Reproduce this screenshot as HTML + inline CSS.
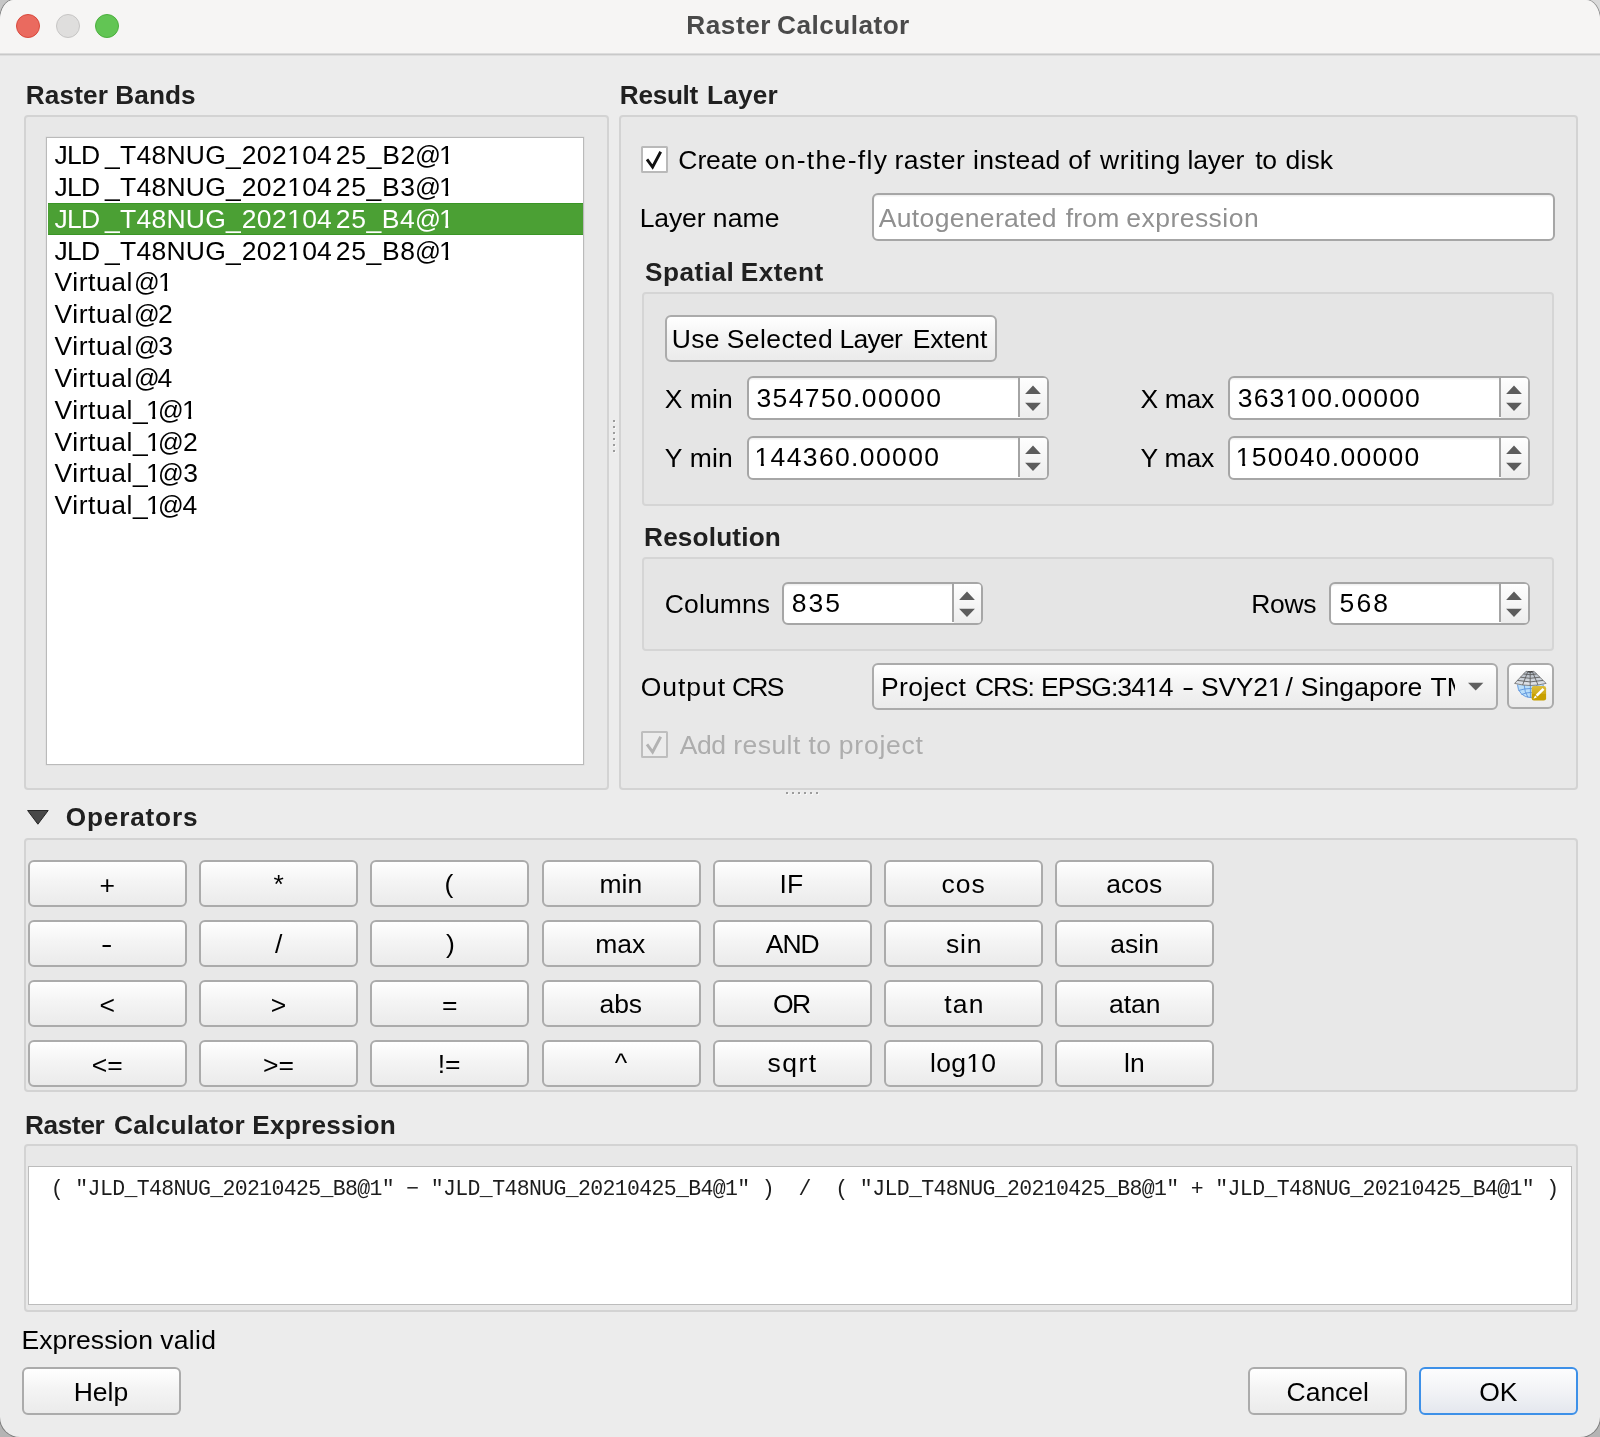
<!DOCTYPE html>
<html><head><meta charset="utf-8"><title>Raster Calculator</title>
<style>
html,body{margin:0;padding:0;}
body{width:1600px;height:1437px;overflow:hidden;background:#b4b4b4;font-family:"Liberation Sans",sans-serif;position:relative;}
#win{will-change:transform;position:absolute;left:0;top:0;width:1600px;height:1437px;background:#ececec;border-radius:13.5px 14px 20px 20px / 20.5px 20.5px 20px 20px;overflow:hidden;box-shadow:0 0 0 1px rgba(0,0,0,.32);}
#tb{position:absolute;left:0;top:0;width:1600px;height:56px;background:linear-gradient(#f6f5f4 0,#f6f5f4 53px,#dcdcdc 53px,#dcdcdc 54px,#c9c9c9 54px,#c9c9c9 55px,#dedede 55px,#dedede 56px);}
.a{position:absolute;box-sizing:border-box;}
.t{position:absolute;white-space:pre;line-height:1;color:#000;}
.gb{border:2px solid #d3d3d3;background:#e8e8e8;border-radius:4px;}
.gb2{border:2px solid #d5d5d5;background:#e5e5e5;border-radius:4px;}
.btn{border:2px solid #ababab;border-radius:6px;background:linear-gradient(#ffffff,#f4f4f4 45%,#ebebeb);}
.inp{border:2px solid #a6a6a6;border-radius:6px;background:#fff;box-shadow:inset 0 1.5px 1px rgba(0,0,0,.06);}
.dot{border-radius:50%;}
.o{display:inline-block;font-style:normal;clip-path:polygon(0 0,100% 0,100% 20px,9.35px 20px,9.35px 100%,6.35px 100%,6.35px 20px,0 20px);}
</style></head><body><div class="a" style="left:0;top:0;width:14px;height:20px;background:#c6c6c6"></div><div class="a" style="left:1586px;top:0;width:14px;height:20px;background:#dadada"></div><div id="win">
<div id="tb"></div>

<div class="a dot" style="left:16px;top:14px;width:24px;height:24px;background:#ea6a5f;border:1px solid #d8493d;"></div>
<div class="a dot" style="left:56px;top:14px;width:24px;height:24px;background:#dfdedd;border:1px solid #c6c5c4;"></div>
<div class="a dot" style="left:95.4px;top:14px;width:24px;height:24px;background:#62c554;border:1px solid #4caf3e;"></div>
<div class="a gb" style="left:24px;top:115px;width:585px;height:675px;"></div>
<div class="a gb" style="left:619px;top:115px;width:959px;height:675px;"></div>
<div class="a gb2" style="left:642px;top:292px;width:912px;height:213.5px;"></div>
<div class="a gb2" style="left:642px;top:557px;width:912px;height:94px;"></div>
<div class="a gb" style="left:24px;top:838px;width:1554px;height:254px;"></div>
<div class="a gb" style="left:24px;top:1144px;width:1554px;height:168px;"></div>
<div class="a a" style="left:46px;top:137px;width:538px;height:628px;background:#fff;border:1px solid #bababa;box-shadow:0 0 0 0.5px rgba(190,190,190,.35);"></div>
<div class="a a" style="left:48px;top:203px;width:535px;height:32px;background:#4ba034;border-top:1px solid #3a9526;border-bottom:1px solid #3a9526;"></div>
<div class="a a" style="left:641px;top:146px;width:27px;height:27px;background:#fff;border:2px solid #b9b9b9;border-radius:1.5px;"></div>
<svg class="a" style="left:641px;top:145.6px" width="28" height="28" viewBox="0 0 28 28"><path d="M6.0 13.3 L11.6 21.0 L19.7 5.8" fill="none" stroke="#111" stroke-width="2.9" stroke-linejoin="miter" stroke-miterlimit="6"/></svg>
<div class="a a" style="left:641px;top:731px;width:27px;height:27px;background:#ececec;border:2px solid #bebebe;border-radius:1.5px;"></div>
<svg class="a" style="left:641px;top:730.6px" width="28" height="28" viewBox="0 0 28 28"><path d="M6.0 13.3 L11.6 21.0 L19.7 5.8" fill="none" stroke="#b2b2b2" stroke-width="2.9" stroke-linejoin="miter" stroke-miterlimit="6"/></svg>
<div class="a inp" style="left:872px;top:193px;width:682.5px;height:48px;"></div>
<div class="a btn" style="left:665px;top:315px;width:332px;height:47px;"></div>
<div class="a inp" style="left:747px;top:376px;width:302px;height:44px;overflow:hidden;"></div>
<div class="a" style="left:1020px;top:378px;width:27px;height:40px;background:linear-gradient(#fefefe,#ededed);border-radius:0 3px 3px 0;"></div>
<div class="a" style="left:1018px;top:377px;width:2px;height:40px;background:#a4a4a4;"></div>
<svg class="a" style="left:1022.8px;top:382.4px" width="20" height="32" viewBox="0 0 20 32"><path d="M10 3.6 L17.9 12 L2.1 12 Z M2.1 20.8 L17.9 20.8 L10 29 Z" fill="#5c5c5c"/></svg>
<div class="a inp" style="left:747px;top:436px;width:302px;height:43.5px;overflow:hidden;"></div>
<div class="a" style="left:1020px;top:438px;width:27px;height:39.5px;background:linear-gradient(#fefefe,#ededed);border-radius:0 3px 3px 0;"></div>
<div class="a" style="left:1018px;top:437px;width:2px;height:39.5px;background:#a4a4a4;"></div>
<svg class="a" style="left:1022.8px;top:442.15px" width="20" height="32" viewBox="0 0 20 32"><path d="M10 3.6 L17.9 12 L2.1 12 Z M2.1 20.8 L17.9 20.8 L10 29 Z" fill="#5c5c5c"/></svg>
<div class="a inp" style="left:1228px;top:376px;width:302px;height:44px;overflow:hidden;"></div>
<div class="a" style="left:1501px;top:378px;width:27px;height:40px;background:linear-gradient(#fefefe,#ededed);border-radius:0 3px 3px 0;"></div>
<div class="a" style="left:1499px;top:377px;width:2px;height:40px;background:#a4a4a4;"></div>
<svg class="a" style="left:1503.8px;top:382.4px" width="20" height="32" viewBox="0 0 20 32"><path d="M10 3.6 L17.9 12 L2.1 12 Z M2.1 20.8 L17.9 20.8 L10 29 Z" fill="#5c5c5c"/></svg>
<div class="a inp" style="left:1228px;top:436px;width:302px;height:43.5px;overflow:hidden;"></div>
<div class="a" style="left:1501px;top:438px;width:27px;height:39.5px;background:linear-gradient(#fefefe,#ededed);border-radius:0 3px 3px 0;"></div>
<div class="a" style="left:1499px;top:437px;width:2px;height:39.5px;background:#a4a4a4;"></div>
<svg class="a" style="left:1503.8px;top:442.15px" width="20" height="32" viewBox="0 0 20 32"><path d="M10 3.6 L17.9 12 L2.1 12 Z M2.1 20.8 L17.9 20.8 L10 29 Z" fill="#5c5c5c"/></svg>
<div class="a inp" style="left:782px;top:581.5px;width:201px;height:43.5px;overflow:hidden;"></div>
<div class="a" style="left:954px;top:583.5px;width:27px;height:39.5px;background:linear-gradient(#fefefe,#ededed);border-radius:0 3px 3px 0;"></div>
<div class="a" style="left:952px;top:582.5px;width:2px;height:39.5px;background:#a4a4a4;"></div>
<svg class="a" style="left:956.8px;top:587.65px" width="20" height="32" viewBox="0 0 20 32"><path d="M10 3.6 L17.9 12 L2.1 12 Z M2.1 20.8 L17.9 20.8 L10 29 Z" fill="#5c5c5c"/></svg>
<div class="a inp" style="left:1329px;top:581.5px;width:201px;height:43.5px;overflow:hidden;"></div>
<div class="a" style="left:1501px;top:583.5px;width:27px;height:39.5px;background:linear-gradient(#fefefe,#ededed);border-radius:0 3px 3px 0;"></div>
<div class="a" style="left:1499px;top:582.5px;width:2px;height:39.5px;background:#a4a4a4;"></div>
<svg class="a" style="left:1503.8px;top:587.65px" width="20" height="32" viewBox="0 0 20 32"><path d="M10 3.6 L17.9 12 L2.1 12 Z M2.1 20.8 L17.9 20.8 L10 29 Z" fill="#5c5c5c"/></svg>
<div class="a btn" style="left:872px;top:663px;width:626px;height:47px;"></div>
<svg class="a" style="left:1466px;top:681px" width="20" height="12" viewBox="0 0 20 12"><path d="M2 1.8 L17.4 1.8 L9.7 9.6 Z" fill="#606060"/></svg>
<div class="a btn" style="left:1507px;top:663px;width:47px;height:45.5px;"></div>
<svg class="a" style="left:1507px;top:663px" width="47" height="46" viewBox="1507 663 47 46">
<defs><linearGradient id="gf" x1="0" y1="0" x2="0" y2="1"><stop offset="0" stop-color="#aeb6c0"/><stop offset="1" stop-color="#e4e7ec"/></linearGradient>
<linearGradient id="gy" x1="0" y1="0" x2="0" y2="1"><stop offset="0" stop-color="#dcbd3c"/><stop offset=".55" stop-color="#cfaa18"/><stop offset=".56" stop-color="#c8a000"/><stop offset="1" stop-color="#c8a000"/></linearGradient>
<clipPath id="cg"><rect x="1510" y="684.5" width="40" height="20"/></clipPath></defs>
<g clip-path="url(#cg)"><circle cx="1530.4" cy="684.6" r="12.9" fill="#b9defa" stroke="#5b93dc" stroke-width="0.9"/>
<path d="M1530.4 684 V698 M1524 684 Q1524.5 692 1528 697.5 M1537 684 Q1536.5 692 1533 697.5 M1518.5 690.5 Q1530.4 686.5 1542.5 690.5 M1521.5 694.5 Q1530.4 690.5 1539.5 694.5" fill="none" stroke="#5b93dc" stroke-width="0.9"/></g>
<path d="M1526 671.3 Q1530 672.1 1534 671.3 L1546.1 683.4 Q1530.4 687.6 1514.6 683.4 Z" fill="url(#gf)" stroke="#6a6a6a" stroke-width="0.8" stroke-linejoin="round"/>
<path d="M1530.2 671.8 V685.5 M1527.8 671.6 L1522.6 685 M1532.4 671.6 L1538 685 M1523.6 674 Q1530.2 675.4 1536.6 674 M1520.4 677.2 Q1530.2 679.4 1540 677.2 M1517.4 680.4 Q1530.2 683.4 1543 680.4" fill="none" stroke="#5a5a5a" stroke-width="0.85"/>
<path d="M1528.2 671.6 Q1530.2 672.4 1532.4 671.6" fill="none" stroke="#333" stroke-width="1.2"/>
<rect x="1531.7" y="686" width="14.4" height="14.4" rx="2.2" fill="url(#gy)"/>
<path d="M1542.6 687.9 L1544.4 689.7 L1537.6 696.6 L1535.7 694.7 Z M1535.1 695.4 L1537 697.3 L1533.5 698.7 Z" fill="#fff"/>
</svg>
<svg class="a" style="left:26px;top:809px" width="24" height="17" viewBox="0 0 24 17"><path d="M1.6 1.5 L22.2 1.5 L11.9 15.2 Z" fill="#484848" stroke="#262626" stroke-width="1" stroke-linejoin="round"/></svg>
<div class="a btn" style="left:28px;top:860px;width:159px;height:46.5px;"></div>
<div class="a btn" style="left:199px;top:860px;width:159px;height:46.5px;"></div>
<div class="a btn" style="left:370px;top:860px;width:159px;height:46.5px;"></div>
<div class="a btn" style="left:542px;top:860px;width:159px;height:46.5px;"></div>
<div class="a btn" style="left:713px;top:860px;width:159px;height:46.5px;"></div>
<div class="a btn" style="left:884px;top:860px;width:159px;height:46.5px;"></div>
<div class="a btn" style="left:1055px;top:860px;width:159px;height:46.5px;"></div>
<div class="a btn" style="left:28px;top:920px;width:159px;height:46.5px;"></div>
<div class="a btn" style="left:199px;top:920px;width:159px;height:46.5px;"></div>
<div class="a btn" style="left:370px;top:920px;width:159px;height:46.5px;"></div>
<div class="a btn" style="left:542px;top:920px;width:159px;height:46.5px;"></div>
<div class="a btn" style="left:713px;top:920px;width:159px;height:46.5px;"></div>
<div class="a btn" style="left:884px;top:920px;width:159px;height:46.5px;"></div>
<div class="a btn" style="left:1055px;top:920px;width:159px;height:46.5px;"></div>
<div class="a btn" style="left:28px;top:980px;width:159px;height:46.5px;"></div>
<div class="a btn" style="left:199px;top:980px;width:159px;height:46.5px;"></div>
<div class="a btn" style="left:370px;top:980px;width:159px;height:46.5px;"></div>
<div class="a btn" style="left:542px;top:980px;width:159px;height:46.5px;"></div>
<div class="a btn" style="left:713px;top:980px;width:159px;height:46.5px;"></div>
<div class="a btn" style="left:884px;top:980px;width:159px;height:46.5px;"></div>
<div class="a btn" style="left:1055px;top:980px;width:159px;height:46.5px;"></div>
<div class="a btn" style="left:28px;top:1040px;width:159px;height:46.5px;"></div>
<div class="a btn" style="left:199px;top:1040px;width:159px;height:46.5px;"></div>
<div class="a btn" style="left:370px;top:1040px;width:159px;height:46.5px;"></div>
<div class="a btn" style="left:542px;top:1040px;width:159px;height:46.5px;"></div>
<div class="a btn" style="left:713px;top:1040px;width:159px;height:46.5px;"></div>
<div class="a btn" style="left:884px;top:1040px;width:159px;height:46.5px;"></div>
<div class="a btn" style="left:1055px;top:1040px;width:159px;height:46.5px;"></div>
<div class="a a" style="left:28px;top:1166px;width:1544px;height:139px;background:#fff;border:1.5px solid #bcbcbc;"></div>
<span class="t" id="expr" style="left:50.85px;top:1179px;font-family:'Liberation Mono',monospace;font-size:21.5px;letter-spacing:-0.6441px;color:#1c1c1c;">( &quot;JLD_T48NUG_20210425_B8@1&quot; − &quot;JLD_T48NUG_20210425_B4@1&quot; )  /  ( &quot;JLD_T48NUG_20210425_B8@1&quot; + &quot;JLD_T48NUG_20210425_B4@1&quot; )</span>
<div class="a btn" style="left:22px;top:1367px;width:159px;height:48px;"></div>
<div class="a btn" style="left:1248px;top:1367px;width:159px;height:48px;"></div>
<div class="a btn" style="left:1419px;top:1367px;width:159px;height:48px;border:2px solid #3d90e8;background:linear-gradient(#fdfdfe,#f2f3f6 50%,#e4e7ee);"></div>
<div class="a" style="left:786px;top:792px;width:2px;height:2px;background:#9c9c9c;box-shadow:1px 1px 0 #f7f7f7;"></div>
<div class="a" style="left:792px;top:792px;width:2px;height:2px;background:#9c9c9c;box-shadow:1px 1px 0 #f7f7f7;"></div>
<div class="a" style="left:798px;top:792px;width:2px;height:2px;background:#9c9c9c;box-shadow:1px 1px 0 #f7f7f7;"></div>
<div class="a" style="left:804px;top:792px;width:2px;height:2px;background:#9c9c9c;box-shadow:1px 1px 0 #f7f7f7;"></div>
<div class="a" style="left:810px;top:792px;width:2px;height:2px;background:#9c9c9c;box-shadow:1px 1px 0 #f7f7f7;"></div>
<div class="a" style="left:816px;top:792px;width:2px;height:2px;background:#9c9c9c;box-shadow:1px 1px 0 #f7f7f7;"></div>
<div class="a" style="left:613px;top:420px;width:2px;height:2px;background:#9c9c9c;box-shadow:1px 1px 0 #f7f7f7;"></div>
<div class="a" style="left:613px;top:426px;width:2px;height:2px;background:#9c9c9c;box-shadow:1px 1px 0 #f7f7f7;"></div>
<div class="a" style="left:613px;top:432px;width:2px;height:2px;background:#9c9c9c;box-shadow:1px 1px 0 #f7f7f7;"></div>
<div class="a" style="left:613px;top:438px;width:2px;height:2px;background:#9c9c9c;box-shadow:1px 1px 0 #f7f7f7;"></div>
<div class="a" style="left:613px;top:444px;width:2px;height:2px;background:#9c9c9c;box-shadow:1px 1px 0 #f7f7f7;"></div>
<div class="a" style="left:613px;top:450px;width:2px;height:2px;background:#9c9c9c;box-shadow:1px 1px 0 #f7f7f7;"></div>
<span class="t" style="font-size:26.2px;top:12px;left:686.25px;letter-spacing:0.550px;font-weight:bold;color:#4a4a4a;">Raster</span>
<span class="t" style="font-size:26.2px;top:12px;left:777.00px;letter-spacing:0.472px;font-weight:bold;color:#4a4a4a;">Calculator</span>
<span class="t" style="font-size:26.2px;top:82px;left:25.65px;letter-spacing:0.170px;font-weight:bold;color:#202020;">Raster</span>
<span class="t" style="font-size:26.2px;top:82px;left:115.25px;letter-spacing:0.087px;font-weight:bold;color:#202020;">Bands</span>
<span class="t" style="font-size:26.2px;top:82px;left:619.85px;letter-spacing:-0.320px;font-weight:bold;color:#202020;">Result</span>
<span class="t" style="font-size:26.2px;top:82px;left:707.05px;letter-spacing:0.213px;font-weight:bold;color:#202020;">Layer</span>
<span class="t" style="font-size:26.5px;top:142px;left:54.50px;letter-spacing:-0.725px;color:#000;">JLD</span>
<span class="t" style="font-size:26.5px;top:142px;left:105.00px;letter-spacing:0.250px;color:#000;">_T48NUG_</span>
<span class="t" style="font-size:26.5px;top:142px;left:241.65px;letter-spacing:0.425px;color:#000;">202<i class="o">1</i>0</span>
<span class="t" style="font-size:26.5px;top:142px;left:316.90px;color:#000;">4</span>
<span class="t" style="font-size:26.5px;top:142px;left:335.85px;letter-spacing:0.700px;color:#000;">25_B2</span>
<span class="t" style="font-size:26.5px;top:142px;left:414.57px;transform:scaleX(0.9644);transform-origin:0 0;color:#000;">@</span>
<span class="t" style="font-size:26.5px;top:142px;left:438.88px;color:#000;"><i class="o">1</i></span>
<span class="t" style="font-size:26.5px;top:174px;left:54.50px;letter-spacing:-0.725px;color:#000;">JLD</span>
<span class="t" style="font-size:26.5px;top:174px;left:105.00px;letter-spacing:0.250px;color:#000;">_T48NUG_</span>
<span class="t" style="font-size:26.5px;top:174px;left:241.65px;letter-spacing:0.425px;color:#000;">202<i class="o">1</i>0</span>
<span class="t" style="font-size:26.5px;top:174px;left:316.90px;color:#000;">4</span>
<span class="t" style="font-size:26.5px;top:174px;left:335.85px;letter-spacing:0.637px;color:#000;">25_B3</span>
<span class="t" style="font-size:26.5px;top:174px;left:414.57px;transform:scaleX(0.9644);transform-origin:0 0;color:#000;">@</span>
<span class="t" style="font-size:26.5px;top:174px;left:438.88px;color:#000;"><i class="o">1</i></span>
<span class="t" style="font-size:26.5px;top:206px;left:54.50px;letter-spacing:-0.725px;color:#fff;">JLD</span>
<span class="t" style="font-size:26.5px;top:206px;left:105.00px;letter-spacing:0.250px;color:#fff;">_T48NUG_</span>
<span class="t" style="font-size:26.5px;top:206px;left:241.65px;letter-spacing:0.425px;color:#fff;">202<i class="o">1</i>0</span>
<span class="t" style="font-size:26.5px;top:206px;left:316.90px;color:#fff;">4</span>
<span class="t" style="font-size:26.5px;top:206px;left:335.85px;letter-spacing:0.575px;color:#fff;">25_B4</span>
<span class="t" style="font-size:26.5px;top:206px;left:414.57px;transform:scaleX(0.9644);transform-origin:0 0;color:#fff;">@</span>
<span class="t" style="font-size:26.5px;top:206px;left:438.88px;color:#fff;"><i class="o">1</i></span>
<span class="t" style="font-size:26.5px;top:238px;left:54.50px;letter-spacing:-0.725px;color:#000;">JLD</span>
<span class="t" style="font-size:26.5px;top:238px;left:105.00px;letter-spacing:0.250px;color:#000;">_T48NUG_</span>
<span class="t" style="font-size:26.5px;top:238px;left:241.65px;letter-spacing:0.425px;color:#000;">202<i class="o">1</i>0</span>
<span class="t" style="font-size:26.5px;top:238px;left:316.90px;color:#000;">4</span>
<span class="t" style="font-size:26.5px;top:238px;left:335.85px;letter-spacing:0.637px;color:#000;">25_B8</span>
<span class="t" style="font-size:26.5px;top:238px;left:414.57px;transform:scaleX(0.9644);transform-origin:0 0;color:#000;">@</span>
<span class="t" style="font-size:26.5px;top:238px;left:438.88px;color:#000;"><i class="o">1</i></span>
<span class="t" style="font-size:26.5px;top:269px;left:54.55px;letter-spacing:0.533px;color:#000;">Virtual</span>
<span class="t" style="font-size:26.5px;top:269px;left:133.59px;transform:scaleX(0.9556);transform-origin:0 0;color:#000;">@</span>
<span class="t" style="font-size:26.5px;top:269px;left:157.88px;color:#000;"><i class="o">1</i></span>
<span class="t" style="font-size:26.5px;top:301px;left:54.55px;letter-spacing:0.533px;color:#000;">Virtual</span>
<span class="t" style="font-size:26.5px;top:301px;left:133.59px;transform:scaleX(0.9556);transform-origin:0 0;color:#000;">@</span>
<span class="t" style="font-size:26.5px;top:301px;left:157.88px;color:#000;">2</span>
<span class="t" style="font-size:26.5px;top:333px;left:54.55px;letter-spacing:0.533px;color:#000;">Virtual</span>
<span class="t" style="font-size:26.5px;top:333px;left:133.59px;transform:scaleX(0.9556);transform-origin:0 0;color:#000;">@</span>
<span class="t" style="font-size:26.5px;top:333px;left:158.30px;color:#000;">3</span>
<span class="t" style="font-size:26.5px;top:365px;left:54.55px;letter-spacing:0.533px;color:#000;">Virtual</span>
<span class="t" style="font-size:26.5px;top:365px;left:133.59px;transform:scaleX(0.9556);transform-origin:0 0;color:#000;">@</span>
<span class="t" style="font-size:26.5px;top:365px;left:157.50px;color:#000;">4</span>
<span class="t" style="font-size:26.5px;top:397px;left:54.55px;letter-spacing:0.533px;color:#000;">Virtual</span>
<span class="t" style="font-size:26.5px;top:397px;left:133.00px;transform:scaleX(1.0000);transform-origin:0 0;color:#000;">_</span>
<span class="t" style="font-size:26.5px;top:397px;left:145.88px;color:#000;"><i class="o">1</i></span>
<span class="t" style="font-size:26.5px;top:397px;left:157.59px;transform:scaleX(0.9556);transform-origin:0 0;color:#000;">@</span>
<span class="t" style="font-size:26.5px;top:397px;left:181.88px;color:#000;"><i class="o">1</i></span>
<span class="t" style="font-size:26.5px;top:429px;left:54.55px;letter-spacing:0.533px;color:#000;">Virtual</span>
<span class="t" style="font-size:26.5px;top:429px;left:133.00px;transform:scaleX(1.0000);transform-origin:0 0;color:#000;">_</span>
<span class="t" style="font-size:26.5px;top:429px;left:145.88px;color:#000;"><i class="o">1</i></span>
<span class="t" style="font-size:26.5px;top:429px;left:157.59px;transform:scaleX(0.9556);transform-origin:0 0;color:#000;">@</span>
<span class="t" style="font-size:26.5px;top:429px;left:182.88px;color:#000;">2</span>
<span class="t" style="font-size:26.5px;top:460px;left:54.55px;letter-spacing:0.533px;color:#000;">Virtual</span>
<span class="t" style="font-size:26.5px;top:460px;left:133.00px;transform:scaleX(1.0000);transform-origin:0 0;color:#000;">_</span>
<span class="t" style="font-size:26.5px;top:460px;left:145.88px;color:#000;"><i class="o">1</i></span>
<span class="t" style="font-size:26.5px;top:460px;left:157.59px;transform:scaleX(0.9556);transform-origin:0 0;color:#000;">@</span>
<span class="t" style="font-size:26.5px;top:460px;left:183.30px;color:#000;">3</span>
<span class="t" style="font-size:26.5px;top:492px;left:54.55px;letter-spacing:0.533px;color:#000;">Virtual</span>
<span class="t" style="font-size:26.5px;top:492px;left:133.00px;transform:scaleX(1.0000);transform-origin:0 0;color:#000;">_</span>
<span class="t" style="font-size:26.5px;top:492px;left:145.88px;color:#000;"><i class="o">1</i></span>
<span class="t" style="font-size:26.5px;top:492px;left:157.59px;transform:scaleX(0.9556);transform-origin:0 0;color:#000;">@</span>
<span class="t" style="font-size:26.5px;top:492px;left:182.50px;color:#000;">4</span>
<span class="t" style="font-size:26.5px;top:147px;left:678.35px;letter-spacing:-0.100px;">Create</span>
<span class="t" style="font-size:26.5px;top:147px;left:764.60px;letter-spacing:1.317px;">on-the-fly</span>
<span class="t" style="font-size:26.5px;top:147px;left:894.55px;letter-spacing:0.500px;">raster</span>
<span class="t" style="font-size:26.5px;top:147px;left:973.05px;letter-spacing:0.300px;">instead</span>
<span class="t" style="font-size:26.5px;top:147px;left:1068.30px;letter-spacing:0.050px;">of</span>
<span class="t" style="font-size:26.5px;top:147px;left:1100.10px;letter-spacing:0.608px;">writing</span>
<span class="t" style="font-size:26.5px;top:147px;left:1187.45px;letter-spacing:-0.163px;">layer</span>
<span class="t" style="font-size:26.5px;top:147px;left:1255.20px;letter-spacing:-0.300px;">to</span>
<span class="t" style="font-size:26.5px;top:147px;left:1285.60px;letter-spacing:0.100px;">disk</span>
<span class="t" style="font-size:26.5px;top:205px;left:639.75px;letter-spacing:-0.125px;">Layer</span>
<span class="t" style="font-size:26.5px;top:205px;left:712.75px;letter-spacing:0.183px;">name</span>
<span class="t" style="font-size:26.5px;top:205px;left:878.80px;letter-spacing:0.329px;color:#909090;">Autogenerated</span>
<span class="t" style="font-size:26.5px;top:205px;left:1065.80px;letter-spacing:0.150px;color:#909090;">from</span>
<span class="t" style="font-size:26.5px;top:205px;left:1126.25px;letter-spacing:0.472px;color:#909090;">expression</span>
<span class="t" style="font-size:26.2px;top:259px;left:645.05px;letter-spacing:0.492px;font-weight:bold;color:#202020;">Spatial</span>
<span class="t" style="font-size:26.2px;top:259px;left:740.75px;letter-spacing:0.500px;font-weight:bold;color:#202020;">Extent</span>
<span class="t" style="font-size:26.5px;top:326px;left:671.80px;letter-spacing:0.300px;">Use</span>
<span class="t" style="font-size:26.5px;top:326px;left:726.75px;letter-spacing:0.407px;">Selected</span>
<span class="t" style="font-size:26.5px;top:326px;left:839.45px;letter-spacing:-0.750px;">Layer</span>
<span class="t" style="font-size:26.5px;top:326px;left:912.75px;letter-spacing:-0.110px;">Extent</span>
<span class="t" style="font-size:26.5px;top:386px;left:664.85px;letter-spacing:0.012px;">X min</span>
<span class="t" style="font-size:26.5px;top:445px;left:664.85px;letter-spacing:0.137px;">Y min</span>
<span class="t" style="font-size:26.5px;top:386px;left:1140.55px;letter-spacing:-0.375px;">X max</span>
<span class="t" style="font-size:26.5px;top:445px;left:1140.55px;letter-spacing:-0.250px;">Y max</span>
<span class="t" style="font-size:26.5px;top:385px;left:756.50px;letter-spacing:1.364px;">354750.00000</span>
<span class="t" style="font-size:26.5px;top:444px;left:754.50px;letter-spacing:1.364px;"><i class="o">1</i>44360.00000</span>
<span class="t" style="font-size:26.5px;top:385px;left:1237.80px;letter-spacing:1.136px;">363<i class="o">1</i>00.00000</span>
<span class="t" style="font-size:26.5px;top:444px;left:1235.80px;letter-spacing:1.273px;"><i class="o">1</i>50040.00000</span>
<span class="t" style="font-size:26.2px;top:524px;left:644.05px;letter-spacing:0.167px;font-weight:bold;color:#202020;">Resolution</span>
<span class="t" style="font-size:26.5px;top:591px;left:664.75px;letter-spacing:0.125px;">Columns</span>
<span class="t" style="font-size:26.5px;top:590px;left:791.85px;letter-spacing:1.975px;">835</span>
<span class="t" style="font-size:26.5px;top:591px;left:1251.25px;letter-spacing:-0.367px;">Rows</span>
<span class="t" style="font-size:26.5px;top:590px;left:1339.60px;letter-spacing:2.150px;">568</span>
<span class="t" style="font-size:26.5px;top:674px;left:640.75px;letter-spacing:0.960px;">Output</span>
<span class="t" style="font-size:26.5px;top:674px;left:731.95px;letter-spacing:-1.750px;">CRS</span>
<span class="t" style="font-size:26.5px;top:674px;left:880.95px;letter-spacing:0.400px;">Project</span>
<span class="t" style="font-size:26.5px;top:674px;left:974.95px;letter-spacing:-1.117px;">CRS:</span>
<span class="t" style="font-size:26.5px;top:674px;left:1040.95px;letter-spacing:-0.925px;">EPSG:34<i class="o">1</i>4</span>
<span class="t" style="font-size:26.5px;top:674px;left:1182.27px;transform:scaleX(1.3846);transform-origin:0 0;">-</span>
<span class="t" style="font-size:26.5px;top:674px;left:1201.05px;letter-spacing:-0.262px;">SVY2<i class="o">1</i></span>
<span class="t" style="font-size:26.5px;top:674px;left:1285.38px;">/</span>
<span class="t" style="font-size:26.5px;top:674px;left:1300.75px;letter-spacing:0.094px;">Singapore</span>
<span class="t" style="font-size:26.5px;top:674px;left:1430.50px;width:24.80px;overflow:hidden;">TM</span>
<span class="t" style="font-size:26.5px;top:732px;left:679.80px;letter-spacing:-0.450px;color:#adadad;">Add</span>
<span class="t" style="font-size:26.5px;top:732px;left:733.25px;letter-spacing:0.450px;color:#adadad;">result</span>
<span class="t" style="font-size:26.5px;top:732px;left:808.40px;letter-spacing:0.600px;color:#adadad;">to</span>
<span class="t" style="font-size:26.5px;top:732px;left:838.85px;letter-spacing:0.767px;color:#adadad;">project</span>
<span class="t" style="font-size:26.2px;top:804px;left:65.70px;letter-spacing:0.837px;font-weight:bold;color:#202020;">Operators</span>
<span class="t" style="font-size:26.2px;top:1112px;left:24.95px;letter-spacing:-0.330px;font-weight:bold;color:#202020;">Raster</span>
<span class="t" style="font-size:26.2px;top:1112px;left:114.00px;letter-spacing:0.294px;font-weight:bold;color:#202020;">Calculator</span>
<span class="t" style="font-size:26.2px;top:1112px;left:252.15px;letter-spacing:0.272px;font-weight:bold;color:#202020;">Expression</span>
<span class="t" style="font-size:26.5px;top:1327px;left:21.45px;letter-spacing:0.039px;">Expression</span>
<span class="t" style="font-size:26.5px;top:1327px;left:160.25px;letter-spacing:0.300px;">valid</span>
<span class="t" style="font-size:26.5px;top:872px;left:99.55px;">+</span>
<span class="t" style="font-size:26.5px;top:871px;left:273.38px;">*</span>
<span class="t" style="font-size:26.5px;top:871px;left:444.57px;">(</span>
<span class="t" style="font-size:26.5px;top:871px;left:599.52px;">min</span>
<span class="t" style="font-size:26.5px;top:871px;left:779.45px;letter-spacing:0.300px;">IF</span>
<span class="t" style="font-size:26.5px;top:871px;left:941.60px;letter-spacing:0.950px;">cos</span>
<span class="t" style="font-size:26.5px;top:871px;left:1106.37px;">acos</span>
<span class="t" style="font-size:26.5px;top:931px;left:101.48px;transform:scaleX(1.2923);transform-origin:0 0;">-</span>
<span class="t" style="font-size:26.5px;top:931px;left:274.88px;">/</span>
<span class="t" style="font-size:26.5px;top:931px;left:445.95px;">)</span>
<span class="t" style="font-size:26.5px;top:931px;left:595.15px;">max</span>
<span class="t" style="font-size:26.5px;top:931px;left:765.70px;letter-spacing:-0.975px;">AND</span>
<span class="t" style="font-size:26.5px;top:931px;left:945.90px;letter-spacing:0.900px;">sin</span>
<span class="t" style="font-size:26.5px;top:931px;left:1110.37px;">asin</span>
<span class="t" style="font-size:26.5px;top:992px;left:99.55px;">&lt;</span>
<span class="t" style="font-size:26.5px;top:992px;left:270.75px;">&gt;</span>
<span class="t" style="font-size:26.5px;top:992px;left:441.95px;">=</span>
<span class="t" style="font-size:26.5px;top:991px;left:599.40px;">abs</span>
<span class="t" style="font-size:26.5px;top:991px;left:773.10px;letter-spacing:-1.750px;">OR</span>
<span class="t" style="font-size:26.5px;top:991px;left:944.20px;letter-spacing:1.225px;">tan</span>
<span class="t" style="font-size:26.5px;top:991px;left:1109.00px;">atan</span>
<span class="t" style="font-size:26.5px;top:1052px;left:91.80px;">&lt;=</span>
<span class="t" style="font-size:26.5px;top:1052px;left:263.00px;">&gt;=</span>
<span class="t" style="font-size:26.5px;top:1051px;left:437.70px;">!=</span>
<span class="t" style="font-size:26.5px;top:1050px;left:614.65px;">^</span>
<span class="t" style="font-size:26.5px;top:1050px;left:767.50px;letter-spacing:1.483px;">sqrt</span>
<span class="t" style="font-size:26.5px;top:1050px;left:930.05px;letter-spacing:0.250px;">log<i class="o">1</i>0</span>
<span class="t" style="font-size:26.5px;top:1050px;left:1124.12px;">ln</span>
<span class="t" style="font-size:26.5px;top:1379px;left:73.65px;">Help</span>
<span class="t" style="font-size:26.5px;top:1379px;left:1286.50px;">Cancel</span>
<span class="t" style="font-size:26.5px;top:1379px;left:1479.17px;">OK</span>
</div></body></html>
